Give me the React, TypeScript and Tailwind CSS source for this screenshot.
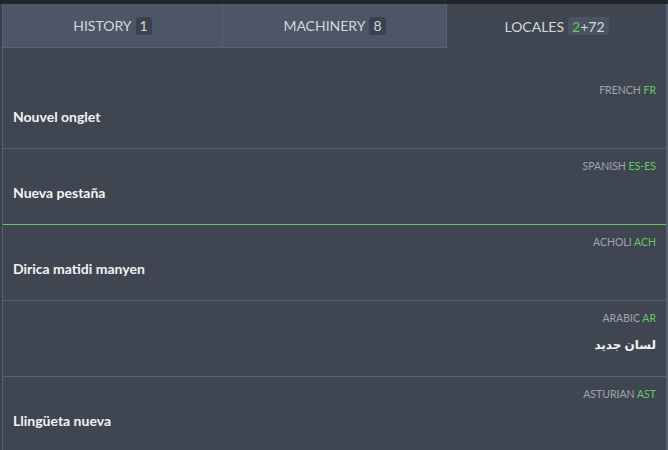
import React from "react";

const rows = [
  { lang: "FRENCH", code: "FR", text: "Nouvel onglet", rtl: false, green: false },
  { lang: "SPANISH", code: "ES-ES", text: "Nueva pestaña", rtl: false, green: false },
  { lang: "ACHOLI", code: "ACH", text: "Dirica matidi manyen", rtl: false, green: true },
  { lang: "ARABIC", code: "AR", text: "لسان جديد", rtl: true, green: false },
  { lang: "ASTURIAN", code: "AST", text: "Llingüeta nueva", rtl: false, green: false },
];

export default function App() {
  return (
    <div
      className="w-[668px] h-[450px] overflow-hidden bg-[#3a404b] flex flex-col"
      style={{ fontFamily: "Lato, 'Noto Sans', sans-serif" }}
    >
      <div className="h-[4px] bg-[#22252a] shrink-0" />
      <div className="ml-[2px] w-[666px] flex-1 flex flex-col bg-[#3f4651] border-l border-r-2 border-[#596273]">
        <div className="flex h-[44px] shrink-0">
          <div className="w-[220px] flex items-center justify-center gap-[4px] bg-[#4c5666] border-b border-r border-[#596273] text-[14px] text-[#d3d7dd]">
            <span>HISTORY</span>
            <span className="h-[18px] px-[4px] rounded-[3px] bg-[#3b424d] flex items-center">1</span>
          </div>
          <div className="w-[224px] flex items-center justify-center gap-[4px] bg-[#4c5666] border-b border-r border-[#596273] text-[14px] text-[#d3d7dd]">
            <span>MACHINERY</span>
            <span className="h-[18px] px-[4px] rounded-[3px] bg-[#3b424d] flex items-center">8</span>
          </div>
          <div className="flex-1 flex items-center justify-center gap-[4px] text-[14px] text-[#d3d7dd]">
            <span>LOCALES</span>
            <span className="h-[18px] px-[4px] rounded-[3px] bg-[#4a5361] flex items-center">
              <span className="text-[#62c95e]">2</span>+72
            </span>
          </div>
        </div>
        <div className="pt-[24px] flex flex-col">
          {rows.map((r, i) => (
            <div
              key={r.code}
              className={`h-[76px] px-[10px] pt-[10px] flex flex-col border-t ${
                i === 0 ? "border-transparent" : r.green ? "border-[#62c95e]" : "border-[#596273]"
              }`}
            >
              <div className="h-[14px] leading-[14px] text-[10.5px] text-right text-[#a0a5ad]">
                {r.lang} <span className="text-[#62c95e]">{r.code}</span>
              </div>
              {r.rtl ? (
                <div
                  dir="rtl"
                  className="mt-[11px] h-[18px] leading-[18px] text-[12px] font-bold text-[#f2f3f5]"
                  style={{ fontFamily: "'Noto Sans', 'DejaVu Sans', sans-serif" }}
                >
                  {r.text}
                </div>
              ) : (
                <div className="mt-[11px] h-[18px] leading-[18px] text-[14px] font-bold text-[#f2f3f5]">
                  {r.text}
                </div>
              )}
            </div>
          ))}
        </div>
      </div>
    </div>
  );
}
